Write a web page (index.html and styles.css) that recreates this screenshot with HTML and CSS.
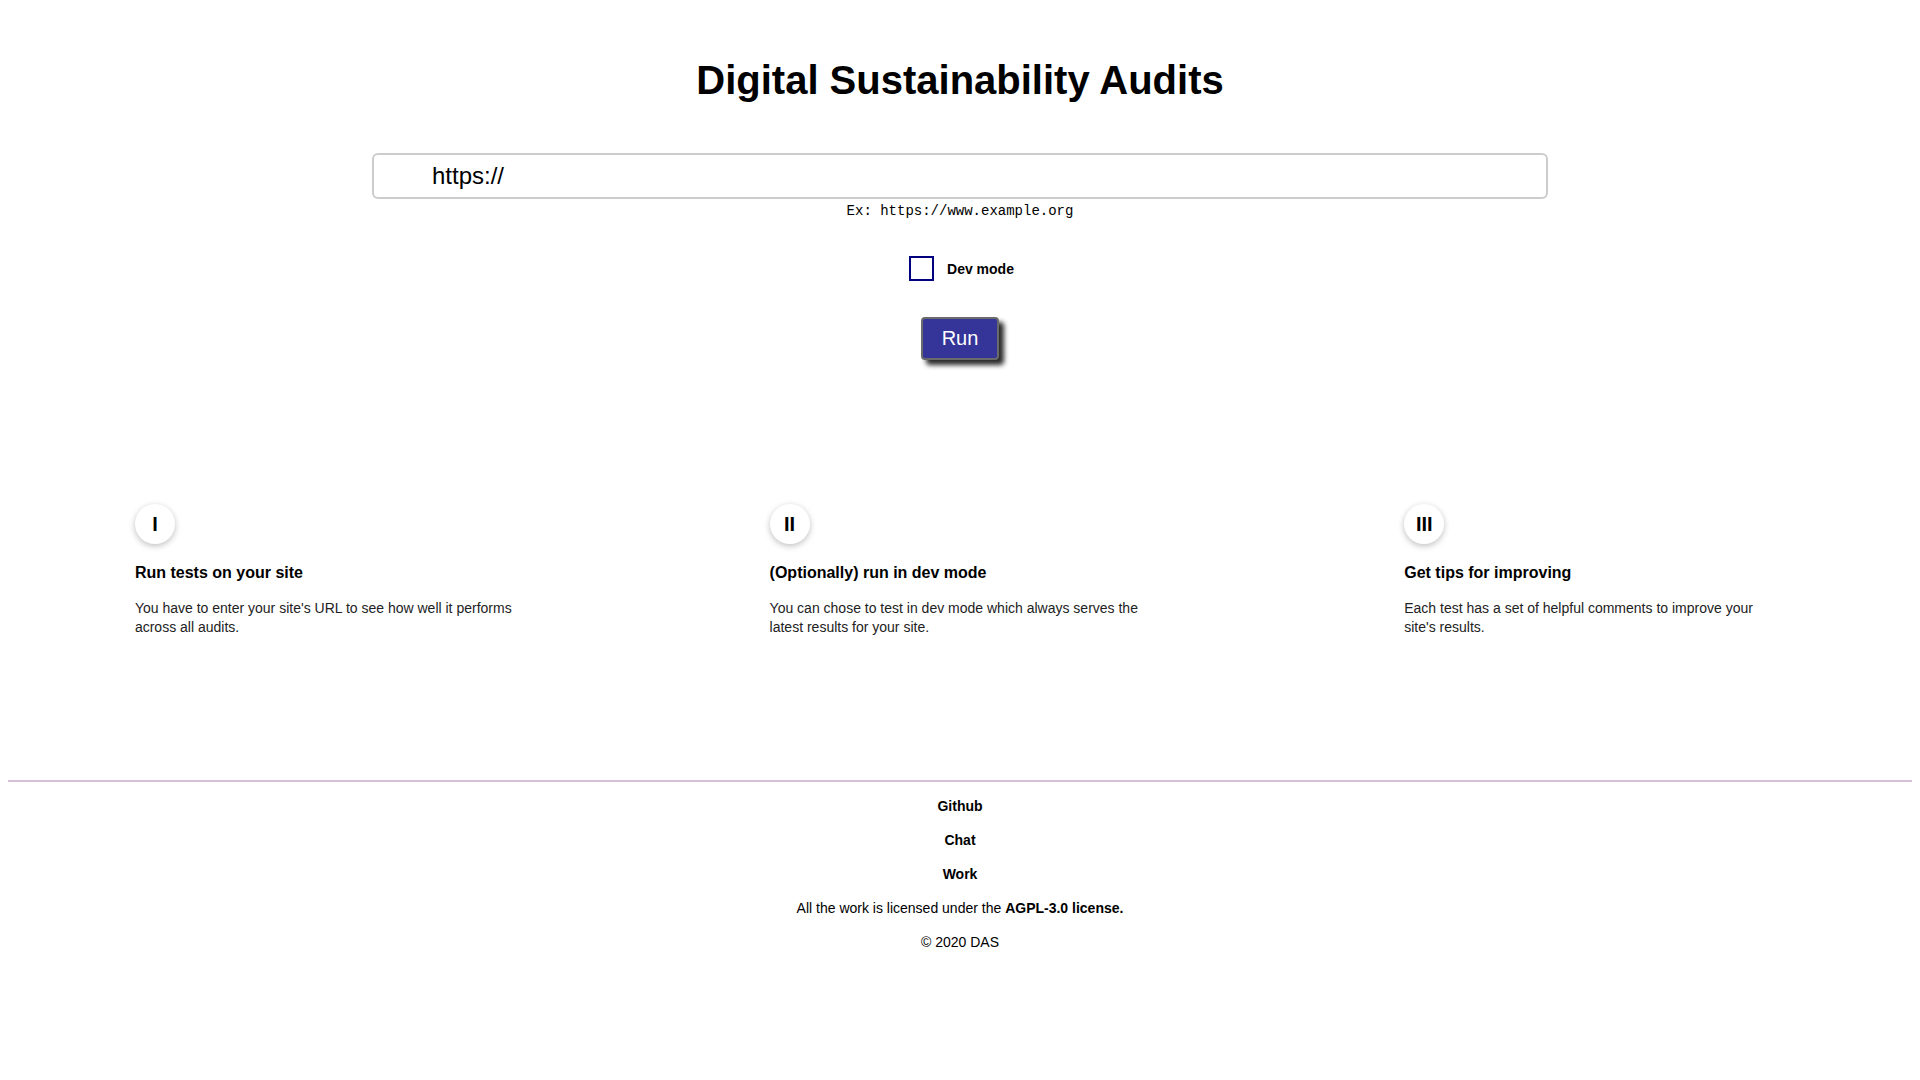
FILE: index.html
```html
<!DOCTYPE html>
<html lang="en">
<head>
<meta charset="utf-8">
<title>Digital Sustainability Audits</title>
<link rel="stylesheet" href="styles.css">
</head>
<body>
<main class="main">
  <h1 class="title">Digital Sustainability Audits</h1>
  <form class="form">
    <input class="url-input" type="text" value="https://">
    <div class="example">Ex: https://www.example.org</div>
    <label class="dev-row">
      <input class="dev-check" type="checkbox">
      <span class="dev-label">Dev mode</span>
    </label>
    <button class="run-btn" type="button">Run</button>
  </form>

  <section class="steps">
    <div class="step">
      <div class="step-num">I</div>
      <h3 class="step-title">Run tests on your site</h3>
      <p class="step-text">You have to enter your site's URL to see how well it performs across all audits.</p>
    </div>
    <div class="step">
      <div class="step-num">II</div>
      <h3 class="step-title">(Optionally) run in dev mode</h3>
      <p class="step-text">You can chose to test in dev mode which always serves the latest results for your site.</p>
    </div>
    <div class="step">
      <div class="step-num">III</div>
      <h3 class="step-title">Get tips for improving</h3>
      <p class="step-text">Each test has a set of helpful comments to improve your site's results.</p>
    </div>
  </section>
</main>

<footer class="footer">
  <hr class="divider">
  <div class="footer-rows">
    <a class="footer-link" href="#">Github</a>
    <a class="footer-link" href="#">Chat</a>
    <a class="footer-link" href="#">Work</a>
    <p class="footer-line">All the work is licensed under the <strong>AGPL-3.0 license.</strong></p>
    <p class="footer-line">© 2020 DAS</p>
  </div>
</footer>
</body>
</html>
```

FILE: styles.css
```css
html, body {
  background: #ffffff;
}

body {
  margin: 8px;
  font-family: "Liberation Sans", Arial, Helvetica, sans-serif;
  color: #000;
}

.main {
  padding-top: 49px;
}

.title {
  margin: 0;
  font-size: 40px;
  line-height: 46px;
  font-weight: 700;
  text-align: center;
}

.form {
  margin-top: 50px;
  display: flex;
  flex-direction: column;
  align-items: center;
}

.url-input {
  box-sizing: border-box;
  width: 1176px;
  height: 46px;
  margin: 0;
  padding: 0 58px;
  border: 2px solid #cccccc;
  border-radius: 6px;
  font-family: "Liberation Sans", Arial, sans-serif;
  font-size: 24px;
  color: #000;
  background: #fff;
  outline: none;
}

.example {
  margin-top: 4px;
  font-family: "Liberation Mono", "Courier New", monospace;
  font-size: 14px;
  line-height: 16px;
}

.dev-row {
  margin-top: 37px;
  display: flex;
  align-items: center;
  gap: 10px;
}

.dev-check {
  appearance: none;
  -webkit-appearance: none;
  box-sizing: border-box;
  width: 25px;
  height: 25px;
  margin: 0 3px 0 3px;
  border: 2px solid #000080;
  background: #fff;
}

.dev-label {
  font-size: 14px;
  font-weight: 700;
  line-height: 16px;
}

.run-btn {
  margin-top: 36px;
  box-sizing: border-box;
  height: 43px;
  padding: 0 19px;
  border: 2px solid #6a6a6a;
  border-radius: 4px;
  background: #343499;
  color: #fff;
  font-family: "Liberation Sans", Arial, sans-serif;
  font-size: 20px;
  line-height: 23px;
  box-shadow: 5px 5px 5px #2a2a2a;
}

.steps {
  margin-top: 144px;
  display: grid;
  grid-template-columns: repeat(3, 1fr);
}

.step {
  padding: 0 20%;
}

.step-num {
  width: 40px;
  height: 40px;
  border-radius: 50%;
  background: #fff;
  box-shadow: 0 2px 6px rgba(0, 0, 0, 0.25);
  display: flex;
  align-items: center;
  justify-content: center;
  font-size: 20px;
  font-weight: 700;
}

.step-title {
  margin: 20px 0 0;
  font-size: 16px;
  line-height: 18px;
  font-weight: 700;
}

.step-text {
  margin: 17px 0 0;
  font-size: 14px;
  line-height: 19px;
  color: #222;
}

.footer {
  margin-top: 143px;
}

.divider {
  margin: 0;
  height: 2px;
  border: none;
  background: #d8bfd8;
}

.footer-rows {
  padding-top: 8px;
  display: flex;
  flex-direction: column;
  align-items: center;
  font-size: 14px;
  line-height: 33.9px;
}

.footer-link {
  color: #000;
  font-weight: 700;
  text-decoration: none;
}

.footer-line {
  margin: 0;
}
```
